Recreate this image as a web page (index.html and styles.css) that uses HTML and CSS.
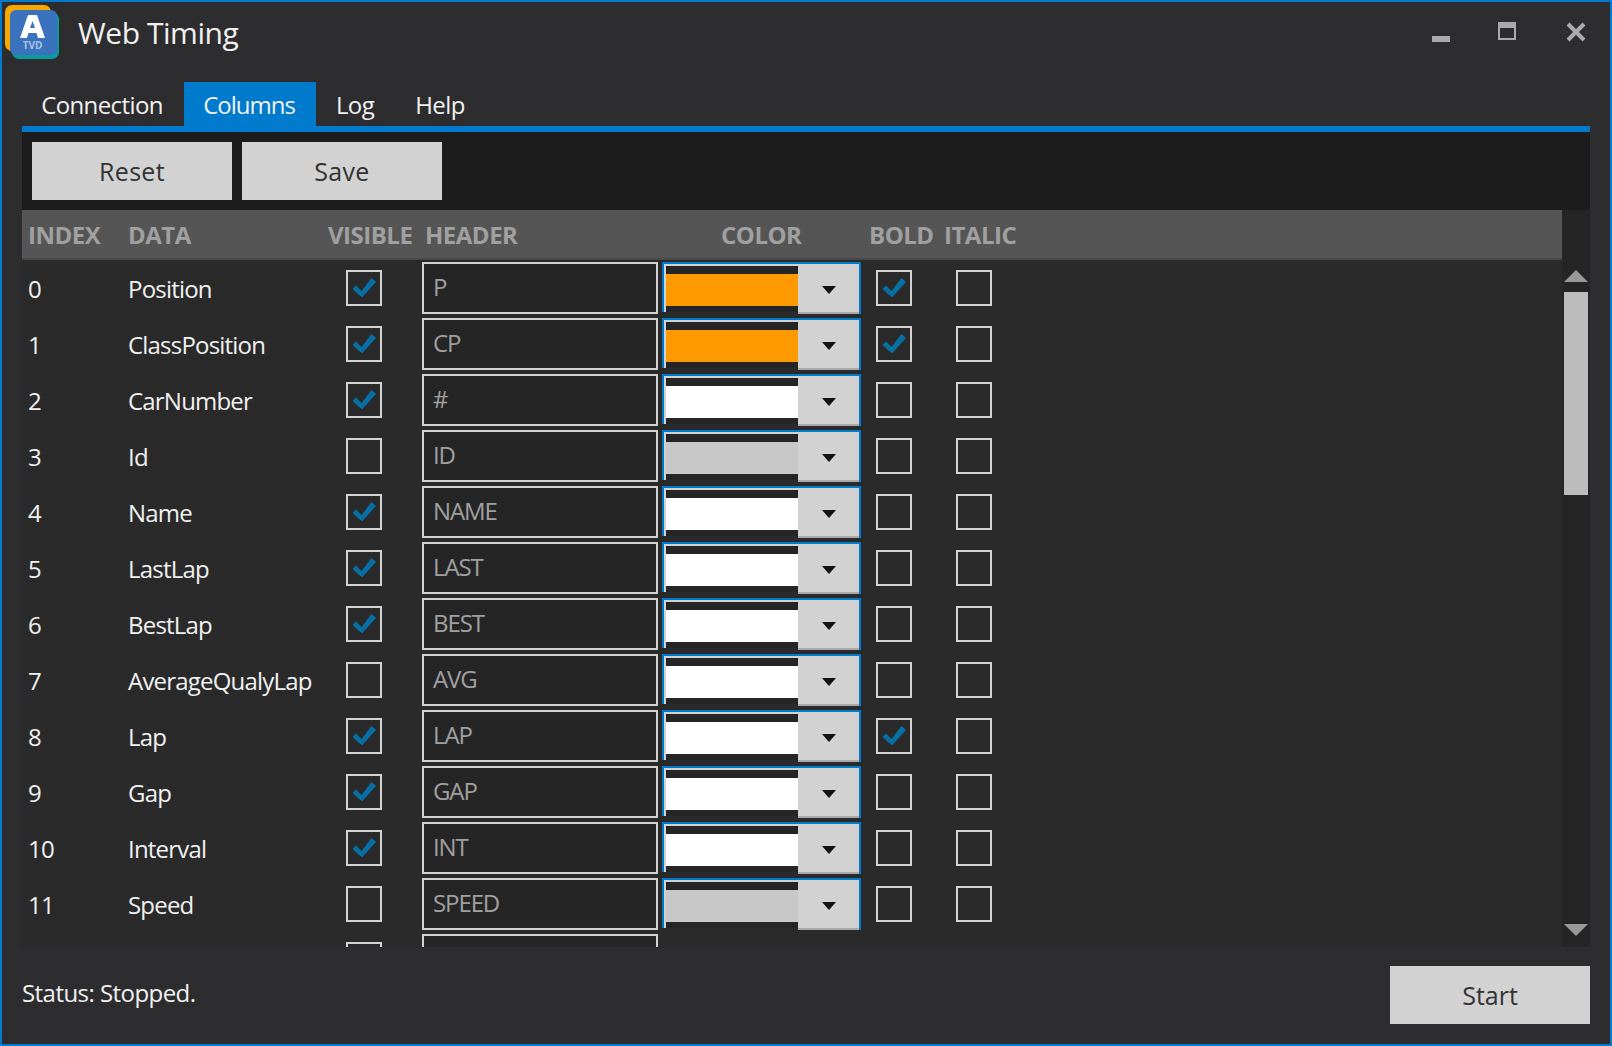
FILE: index.html
```html
<!DOCTYPE html>
<html lang="en">
<head>
<meta charset="utf-8">
<title>Web Timing</title>
<link rel="stylesheet" href="styles.css">
</head>
<body>
<svg class="defs" width="0" height="0" aria-hidden="true"><defs><symbol id="check" viewBox="0 0 36 36"><path d="M6.500 19L10 15.500l5.500 5.500L25.500 8l4.500 4-14 15.500z" fill="#0670a4"/></symbol></defs></svg>
<div class="window">
  <header class="titlebar">
    <svg class="logo" viewBox="0 0 54 54" width="54" height="54" aria-hidden="true">
      <rect x="0" y="0" width="46" height="46" rx="7" fill="#f5a800"/>
      <rect x="7" y="7" width="47" height="47" rx="7" fill="#0e9a9d"/>
      <rect x="5" y="5" width="47" height="45" rx="6" fill="#3a72bd"/>
      <path d="M23 10h9l8 23h-7l-1.500-5h-8L22 33h-7zM27.500 16L25 23h5z" fill="#fff" fill-rule="evenodd"/>
      <text class="logo-text" x="27.500" y="44">TVD</text>
    </svg>
    <h1 class="title">Web Timing</h1>
    <div class="controls">
      <span class="ctl ctl-min"></span>
      <span class="ctl ctl-max"></span>
      <svg class="ctl-close" viewBox="0 0 20 20" width="20" height="20" aria-hidden="true"><path d="M2 2l16 16M18 2L2 18" stroke="#aaa" stroke-width="4"/></svg>
    </div>
  </header>
  <nav class="tabs">
    <span class="tab tab-connection">Connection</span>
    <span class="tab tab-active">Columns</span>
    <span class="tab tab-log">Log</span>
    <span class="tab tab-help">Help</span>
  </nav>
  <main class="panel">
    <div class="toolbar">
      <button class="btn">Reset</button>
      <button class="btn">Save</button>
    </div>
    <div class="tablewrap">
      <div class="tablemain">
        <div class="row head">
          <span>INDEX</span><span>DATA</span><span class="hv">VISIBLE</span><span class="hh">HEADER</span><span class="hc">COLOR</span><span class="hb">BOLD</span><span class="hi">ITALIC</span>
        </div>
        <div class="rows">
          <div class="row"><span>0</span><span>Position</span><span class="cb"><svg class="ck" width="36" height="36"><use href="#check"/></svg></span><span class="tb">P</span><span class="combo"><span class="sw-wrap"><span class="sw sw-o"></span></span><span class="drop"><i class="caret"></i></span></span><span class="cb"><svg class="ck" width="36" height="36"><use href="#check"/></svg></span><span class="cb"></span></div>
          <div class="row"><span>1</span><span>ClassPosition</span><span class="cb"><svg class="ck" width="36" height="36"><use href="#check"/></svg></span><span class="tb">CP</span><span class="combo"><span class="sw-wrap"><span class="sw sw-o"></span></span><span class="drop"><i class="caret"></i></span></span><span class="cb"><svg class="ck" width="36" height="36"><use href="#check"/></svg></span><span class="cb"></span></div>
          <div class="row"><span>2</span><span>CarNumber</span><span class="cb"><svg class="ck" width="36" height="36"><use href="#check"/></svg></span><span class="tb">#</span><span class="combo"><span class="sw-wrap"><span class="sw sw-w"></span></span><span class="drop"><i class="caret"></i></span></span><span class="cb"></span><span class="cb"></span></div>
          <div class="row"><span>3</span><span>Id</span><span class="cb"></span><span class="tb">ID</span><span class="combo"><span class="sw-wrap"><span class="sw sw-g"></span></span><span class="drop"><i class="caret"></i></span></span><span class="cb"></span><span class="cb"></span></div>
          <div class="row"><span>4</span><span>Name</span><span class="cb"><svg class="ck" width="36" height="36"><use href="#check"/></svg></span><span class="tb">NAME</span><span class="combo"><span class="sw-wrap"><span class="sw sw-w"></span></span><span class="drop"><i class="caret"></i></span></span><span class="cb"></span><span class="cb"></span></div>
          <div class="row"><span>5</span><span>LastLap</span><span class="cb"><svg class="ck" width="36" height="36"><use href="#check"/></svg></span><span class="tb">LAST</span><span class="combo"><span class="sw-wrap"><span class="sw sw-w"></span></span><span class="drop"><i class="caret"></i></span></span><span class="cb"></span><span class="cb"></span></div>
          <div class="row"><span>6</span><span>BestLap</span><span class="cb"><svg class="ck" width="36" height="36"><use href="#check"/></svg></span><span class="tb">BEST</span><span class="combo"><span class="sw-wrap"><span class="sw sw-w"></span></span><span class="drop"><i class="caret"></i></span></span><span class="cb"></span><span class="cb"></span></div>
          <div class="row"><span>7</span><span>AverageQualyLap</span><span class="cb"></span><span class="tb">AVG</span><span class="combo"><span class="sw-wrap"><span class="sw sw-w"></span></span><span class="drop"><i class="caret"></i></span></span><span class="cb"></span><span class="cb"></span></div>
          <div class="row"><span>8</span><span>Lap</span><span class="cb"><svg class="ck" width="36" height="36"><use href="#check"/></svg></span><span class="tb">LAP</span><span class="combo"><span class="sw-wrap"><span class="sw sw-w"></span></span><span class="drop"><i class="caret"></i></span></span><span class="cb"><svg class="ck" width="36" height="36"><use href="#check"/></svg></span><span class="cb"></span></div>
          <div class="row"><span>9</span><span>Gap</span><span class="cb"><svg class="ck" width="36" height="36"><use href="#check"/></svg></span><span class="tb">GAP</span><span class="combo"><span class="sw-wrap"><span class="sw sw-w"></span></span><span class="drop"><i class="caret"></i></span></span><span class="cb"></span><span class="cb"></span></div>
          <div class="row"><span>10</span><span>Interval</span><span class="cb"><svg class="ck" width="36" height="36"><use href="#check"/></svg></span><span class="tb">INT</span><span class="combo"><span class="sw-wrap"><span class="sw sw-w"></span></span><span class="drop"><i class="caret"></i></span></span><span class="cb"></span><span class="cb"></span></div>
          <div class="row"><span>11</span><span>Speed</span><span class="cb"></span><span class="tb">SPEED</span><span class="combo"><span class="sw-wrap"><span class="sw sw-g"></span></span><span class="drop"><i class="caret"></i></span></span><span class="cb"></span><span class="cb"></span></div>
          <div class="row"><span></span><span></span><span class="cb"></span><span class="tb"></span></div>
        </div>
      </div>
      <div class="scrollbar">
        <svg class="sb-arrow" width="24" height="13" viewBox="0 0 24 13" aria-hidden="true"><path d="M12 0L24 12H0z" fill="#999"/></svg>
        <div class="thumb"></div>
        <svg class="sb-arrow sb-down" width="24" height="13" viewBox="0 0 24 13" aria-hidden="true"><path d="M12 12L24 0H0z" fill="#999"/></svg>
      </div>
    </div>
  </main>
  <footer class="footer">
    <span class="status">Status: Stopped.</span>
    <button class="btn btn-start">Start</button>
  </footer>
</div>
</body>
</html>
```
FILE: styles.css
```css
* { box-sizing: border-box; }
html, body { margin: 0; height: 100%; }
body { background: #2d2d30; font-family: "Open Sans", "Noto Sans", sans-serif; overflow: hidden; }
.defs { position: absolute; }
.window { width: 1612px; height: 1046px; border: 2px solid #007acc; background: #2d2d30; display: flex; flex-direction: column; }

.titlebar { height: 80px; display: flex; align-items: flex-start; flex: none; }
.logo { margin: 3px 0 0 3px; flex: none; }
.logo-text { font: 700 10px "Open Sans", sans-serif; fill: #a9c4e6; text-anchor: middle; }
.title { margin: 7px 0 0 19px; font-size: 30px; line-height: 48px; font-weight: 400; color: #f1f1f1; letter-spacing: -0.45px; }
.controls { margin-left: auto; display: flex; align-items: flex-start; }
.ctl { display: block; width: 18px; height: 18px; }
.ctl-min { height: 6px; margin: 34px 0 0 0; background: #aaa; }
.ctl-max { margin: 20px 0 0 48px; border: 2px solid #aaa; border-top-width: 6px; }
.ctl-close { margin: 20px 24px 0 50px; }

.tabs { margin: 0 20px; display: flex; height: 50px; border-bottom: 6px solid #007acc; flex: none; }
.tab { line-height: 46px; font-size: 24px; color: #f1f1f1; text-align: center; letter-spacing: -0.6px; padding-right: 2px; }
.tab-connection { width: 162px; }
.tab-active { width: 132px; background: #007acc; letter-spacing: -1px; }
.tab-log { width: 80px; }
.tab-help { width: 90px; }

.panel { margin: 0 20px; flex: 1; min-height: 0; background: #1c1c1c; display: flex; flex-direction: column; }
.toolbar { display: flex; gap: 10px; padding: 10px; height: 78px; flex: none; }
.btn { width: 200px; height: 58px; border: 0; padding: 0; background: #d2d2d2; color: #333; font: 400 25px "Open Sans", "Noto Sans", sans-serif; letter-spacing: 0.3px; }
.btn-start { letter-spacing: 0; }

.tablewrap { flex: 1; min-height: 0; display: flex; background: #2a2a2b; }
.tablemain { flex: 1; min-width: 0; display: flex; flex-direction: column; }
.row { display: grid; grid-template-columns: 100px 218px 76px 240px 214px 80px 36px; align-items: center; height: 52px; }
.head { height: 50px; flex: none; background: #555; border-bottom: 2px solid #484848; font-size: 24px; font-weight: 700; color: #a0a0a0; letter-spacing: -0.5px; padding-left: 6px; white-space: nowrap; }
.hv { margin-left: -18px; }
.hh { margin-left: 3px; }
.hc { margin-left: 59px; }
.hb { margin-left: -7px; }
.hi { margin-left: -12px; }
.rows { flex: 1; min-height: 0; overflow: hidden; padding: 2px 0 0 6px; display: flex; flex-direction: column; gap: 4px; }
.rows .row { flex: none; color: #f1f1f1; font-size: 24px; letter-spacing: -0.8px; }

.cb { width: 36px; height: 36px; border: 2px solid #d2d2d2; display: block; position: relative; }
.ck { position: absolute; left: -2px; top: -2px; }
.tb { width: 236px; height: 52px; border: 2px solid #d2d2d2; background: #252526; color: #a0a0a0; padding-left: 9px; line-height: 46px; letter-spacing: -1.1px; }
.combo { display: flex; align-items: flex-start; height: 52px; width: 199px; border-top: 2px solid #007acc; border-right: 2px solid #007acc; }
.sw-wrap { width: 136px; height: 48px; padding: 10px 0 6px 2px; flex: none; border-left: 2px solid #007acc; background: #252526; box-shadow: inset 2px 2px 0 #d2d2d2; }
.sw { display: block; height: 32px; }
.sw-o { background: #ff9900; }
.sw-w { background: #fff; }
.sw-g { background: #c8c8c8; }
.drop { flex: 1; height: 50px; background: #d2d2d2; border-bottom: 2px solid #aaa; display: flex; align-items: center; justify-content: center; }
.caret { width: 0; height: 0; border: 7px solid transparent; border-top: 8px solid #111; border-bottom: 0; margin-top: 4px; }

.scrollbar { width: 28px; flex: none; background: #252526; display: flex; flex-direction: column; align-items: center; padding-top: 60px; }
.sb-arrow { display: block; flex: none; }
.thumb { width: 24px; height: 203px; margin-top: 9px; background: #bcbcbc; }
.sb-down { margin-top: auto; margin-bottom: 10px; }

.footer { height: 97px; flex: none; display: flex; align-items: flex-start; justify-content: space-between; padding: 19px 20px 0; }
.status { font-size: 24px; line-height: 36px; margin-top: 9px; color: #f1f1f1; letter-spacing: -0.55px; }
```
